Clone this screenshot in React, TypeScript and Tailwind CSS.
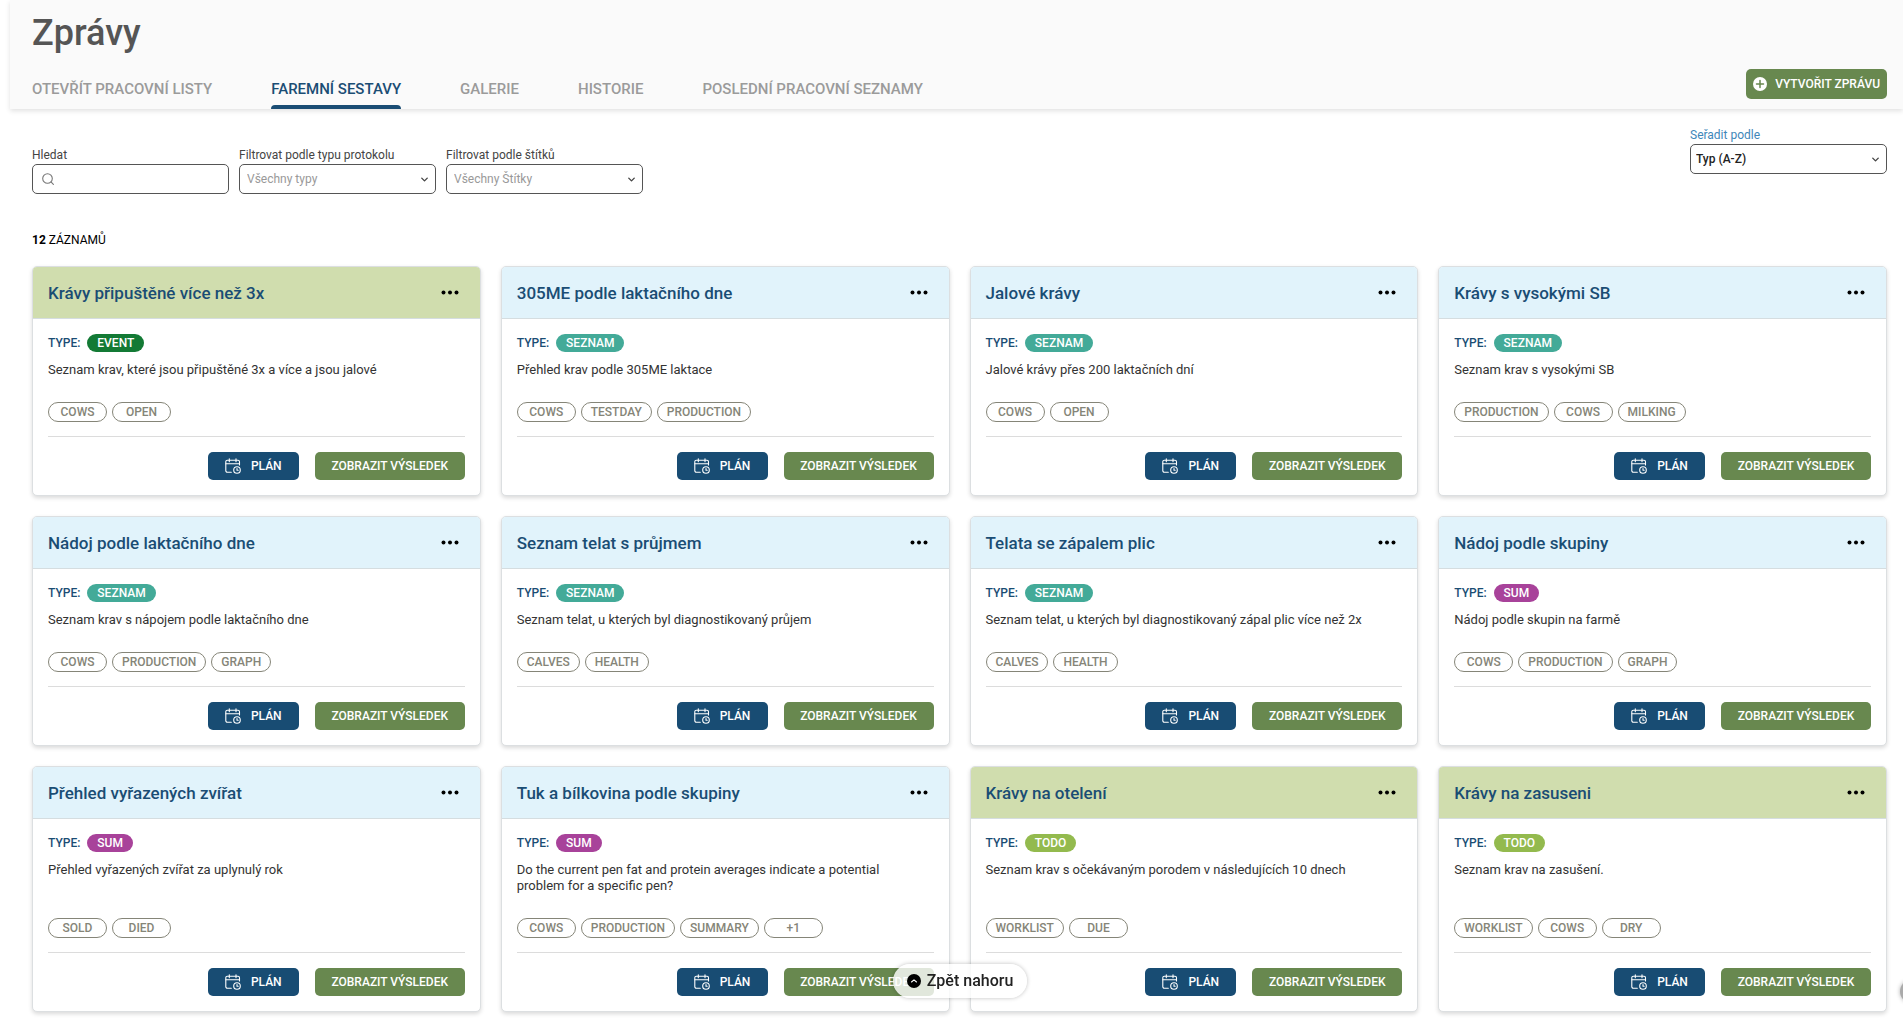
import React from "react";
import { ChevronDown } from "lucide-react";

type Kind = "EVENT" | "SEZNAM" | "SUM" | "TODO";

interface Report {
  title: string;
  kind: Kind;
  description: string;
  tags: string[];
}

const reports: Report[] = [
  { title: "Krávy připuštěné více než 3x", kind: "EVENT", description: "Seznam krav, které jsou připuštěné 3x a více a jsou jalové", tags: ["COWS", "OPEN"] },
  { title: "305ME podle laktačního dne", kind: "SEZNAM", description: "Přehled krav podle 305ME laktace", tags: ["COWS", "TESTDAY", "PRODUCTION"] },
  { title: "Jalové krávy", kind: "SEZNAM", description: "Jalové krávy přes 200 laktačních dní", tags: ["COWS", "OPEN"] },
  { title: "Krávy s vysokými SB", kind: "SEZNAM", description: "Seznam krav s vysokými SB", tags: ["PRODUCTION", "COWS", "MILKING"] },
  { title: "Nádoj podle laktačního dne", kind: "SEZNAM", description: "Seznam krav s nápojem podle laktačního dne", tags: ["COWS", "PRODUCTION", "GRAPH"] },
  { title: "Seznam telat s průjmem", kind: "SEZNAM", description: "Seznam telat, u kterých byl diagnostikovaný průjem", tags: ["CALVES", "HEALTH"] },
  { title: "Telata se zápalem plic", kind: "SEZNAM", description: "Seznam telat, u kterých byl diagnostikovaný zápal plic více než 2x", tags: ["CALVES", "HEALTH"] },
  { title: "Nádoj podle skupiny", kind: "SUM", description: "Nádoj podle skupin na farmě", tags: ["COWS", "PRODUCTION", "GRAPH"] },
  { title: "Přehled vyřazených zvířat", kind: "SUM", description: "Přehled vyřazených zvířat za uplynulý rok", tags: ["SOLD", "DIED"] },
  { title: "Tuk a bílkovina podle skupiny", kind: "SUM", description: "Do the current pen fat and protein averages indicate a potential problem for a specific pen?", tags: ["COWS", "PRODUCTION", "SUMMARY", "+1"] },
  { title: "Krávy na otelení", kind: "TODO", description: "Seznam krav s očekávaným porodem v následujících 10 dnech", tags: ["WORKLIST", "DUE"] },
  { title: "Krávy na zasuseni", kind: "TODO", description: "Seznam krav na zasušení.", tags: ["WORKLIST", "COWS", "DRY"] },
];

const badgeColor: Record<Kind, string> = {
  EVENT: "bg-[#137a35]",
  SEZNAM: "bg-[#43aa98]",
  SUM: "bg-[#a8429a]",
  TODO: "bg-[#93ba4e]",
};

const headerColor: Record<Kind, string> = {
  EVENT: "bg-[#d0ddae]",
  SEZNAM: "bg-[#e1f3fb]",
  SUM: "bg-[#e1f3fb]",
  TODO: "bg-[#d0ddae]",
};

const tabs = ["OTEVŘÍT PRACOVNÍ LISTY", "FAREMNÍ SESTAVY", "GALERIE", "HISTORIE", "POSLEDNÍ PRACOVNÍ SEZNAMY"];

function CalendarClock() {
  return (
    <svg className="size-4" viewBox="0 0 16 16" fill="none" stroke="currentColor" strokeWidth="1.1" strokeLinecap="round" strokeLinejoin="round" aria-hidden="true">
      <path d="M6.3 14.2H2.3A1.5 1.5 0 0 1 .8 12.700V3.700A1.500 1.500 0 0 1 2.300 2.200H13a1.500 1.500 0 0 1 1.500 1.500V7" />
      <path d="M.8 5.800h13.700M4.300.7v3M11 .7v3" />
      <circle cx="12" cy="12" r="3.300" />
      <path d="M12 10.500V12.200h1.200" />
    </svg>
  );
}

function SelectField(props: { id: string; label: string; value: string; labelClass: string; selectClass: string }) {
  return (
    <div className="w-[197px]">
      <label htmlFor={props.id} className={"block text-xs leading-[18px] " + props.labelClass}>{props.label}</label>
      <div className="relative">
        <select id={props.id} className={"block h-[30px] w-full appearance-none rounded-[5px] border border-[#555] bg-white text-xs outline-none " + props.selectClass}>
          <option>{props.value}</option>
        </select>
        <ChevronDown className="pointer-events-none absolute right-[6px] top-[10px] size-[11px] text-[#444]" strokeWidth={3} />
      </div>
    </div>
  );
}

function ReportCard({ report }: { report: Report }) {
  return (
    <article className="flex flex-col overflow-hidden rounded-[5px] border border-[#dcdfe1] bg-white shadow-[0_2px_4px_rgba(0,0,0,0.15)]">
      <header className={"flex h-[52px] items-center justify-between border-b border-[#d5dde0] pl-[15px] pr-[21px] " + headerColor[report.kind]}>
        <h2 className="text-[17px] leading-6 font-medium text-[#1a4d74]">{report.title}</h2>
        <button type="button" aria-label="Další možnosti" className="text-black">
          <svg className="h-3 w-[18px]" viewBox="0 0 18 12" fill="currentColor" aria-hidden="true">
            <circle cx="2.500" cy="5.500" r="2" />
            <circle cx="9" cy="5.500" r="2" />
            <circle cx="15.500" cy="5.500" r="2" />
          </svg>
        </button>
      </header>
      <div className="flex flex-1 flex-col p-[15px]">
        <div className="flex items-center gap-[7px] text-xs font-medium leading-[18px]">
          <span className="text-[#1a4d74]">TYPE:</span>
          <span className={"rounded-full px-[10px] text-white " + badgeColor[report.kind]}>{report.kind}</span>
        </div>
        <p className="mt-[10px] flex-1 pr-2 text-[13px] leading-4 text-[#333]">{report.description}</p>
        <ul className="mt-6 flex gap-[5px]">
          {report.tags.map((tag) => (
            <li key={tag} className="min-w-[59px] rounded-full border border-[#858578] px-[9px] text-center text-xs leading-[18px] font-medium text-[#858578]">{tag}</li>
          ))}
        </ul>
        <div className="mt-[14px] flex justify-end gap-4 border-t border-[#dcdcdc] pt-[15px] text-xs font-medium text-white">
          <button type="button" className="flex h-7 w-[91px] items-center justify-center gap-[10px] rounded-[5px] bg-[#184c73]">
            <CalendarClock />
            PLÁN
          </button>
          <button type="button" className="h-7 w-[150px] rounded-[5px] bg-[#68884f]">ZOBRAZIT VÝSLEDEK</button>
        </div>
      </div>
    </article>
  );
}

export default function App() {
  return (
    <div className="relative overflow-hidden bg-white pl-[10px] font-[Roboto,sans-serif] text-black">
      <header className="flex items-end justify-between bg-[#fafafa] pl-[22px] pr-4 shadow-[0_2px_5px_rgba(0,0,0,0.12)]">
        <div>
          <h1 className="pt-3 text-[36px] leading-[42px] font-medium text-[#555]">Zprávy</h1>
          <nav className="mt-[23px] flex gap-[59px] text-[15px] leading-6 font-medium">
            {tabs.map((tab) => (
              <a
                key={tab}
                href="#"
                className={
                  tab === "FAREMNÍ SESTAVY"
                    ? "flex flex-col gap-1 text-[#1a4d74] after:h-1 after:rounded-t after:bg-[#1a4d74]"
                    : "flex flex-col text-[#9b9b9b]"
                }
              >
                {tab}
              </a>
            ))}
          </nav>
        </div>
        <button type="button" className="mb-[10px] flex h-[30px] w-[141px] items-center justify-between rounded-[5px] bg-[#68884f] px-[7px] text-xs font-medium text-white">
          <svg className="size-[14px]" viewBox="0 0 14 14" aria-hidden="true">
            <circle cx="7" cy="7" r="7" fill="white" />
            <path d="M7 3.500v7M3.500 7h7" stroke="#68884f" strokeWidth="1.500" strokeLinecap="round" />
          </svg>
          VYTVOŘIT ZPRÁVU
        </button>
      </header>

      <main className="pb-[10px] pl-[22px] pr-4">
        <div className="flex items-start justify-between pt-[17px]">
          <div className="flex gap-[10px] pt-5">
            <div className="w-[197px]">
              <label htmlFor="search" className="block text-xs leading-[18px] text-[#444]">Hledat</label>
              <div className="relative">
                <input id="search" type="text" className="block h-[30px] w-full rounded-[5px] border border-[#555] bg-white pl-8 pr-2 text-xs outline-none" />
                <svg className="pointer-events-none absolute left-[10px] top-[9px] size-3" viewBox="0 0 12 12" fill="none" stroke="#777" strokeWidth="1.100" strokeLinecap="round" aria-hidden="true">
                  <circle cx="5.500" cy="5.500" r="4.800" />
                  <path d="M9.200 9.200l2.200 2.200" />
                </svg>
              </div>
            </div>
            <SelectField id="type" label="Filtrovat podle typu protokolu" value="Všechny typy" labelClass="text-[#444]" selectClass="pl-[7px] text-[#999]" />
            <SelectField id="tag" label="Filtrovat podle štítků" value="Všechny Štítky" labelClass="text-[#444]" selectClass="pl-[7px] text-[#999]" />
          </div>
          <SelectField id="sort" label="Seřadit podle" value="Typ (A-Z)" labelClass="text-[#3f87b9]" selectClass="pl-[5px] font-medium text-[#222]" />
        </div>
        <p className="mt-[37px] text-xs leading-[18px]"><strong>12</strong> ZÁZNAMŮ</p>
        <section className="mt-[17px] grid grid-cols-4 gap-5">
          {reports.map((report) => (
            <ReportCard key={report.title} report={report} />
          ))}
        </section>
      </main>

      <button type="button" className="fixed bottom-[25px] left-[893px] flex h-[34px] w-[134px] items-center justify-center gap-[6px] rounded-full bg-white/80 text-base font-medium text-[#222] shadow-[0_0_4px_rgba(0,0,0,0.25)]">
        <svg className="size-[14px]" viewBox="0 0 14 14" aria-hidden="true">
          <circle cx="7" cy="7" r="7" fill="black" />
          <path d="M4.500 8L7 5.800 9.500 8" fill="none" stroke="white" strokeWidth="1.100" strokeLinecap="round" strokeLinejoin="round" />
        </svg>
        Zpět nahoru
      </button>
      <div className="fixed -right-5 bottom-5 size-[23px] rounded-full bg-[#aaa] shadow-[0_0_4px_rgba(0,0,0,0.3)]" />
    </div>
  );
}
